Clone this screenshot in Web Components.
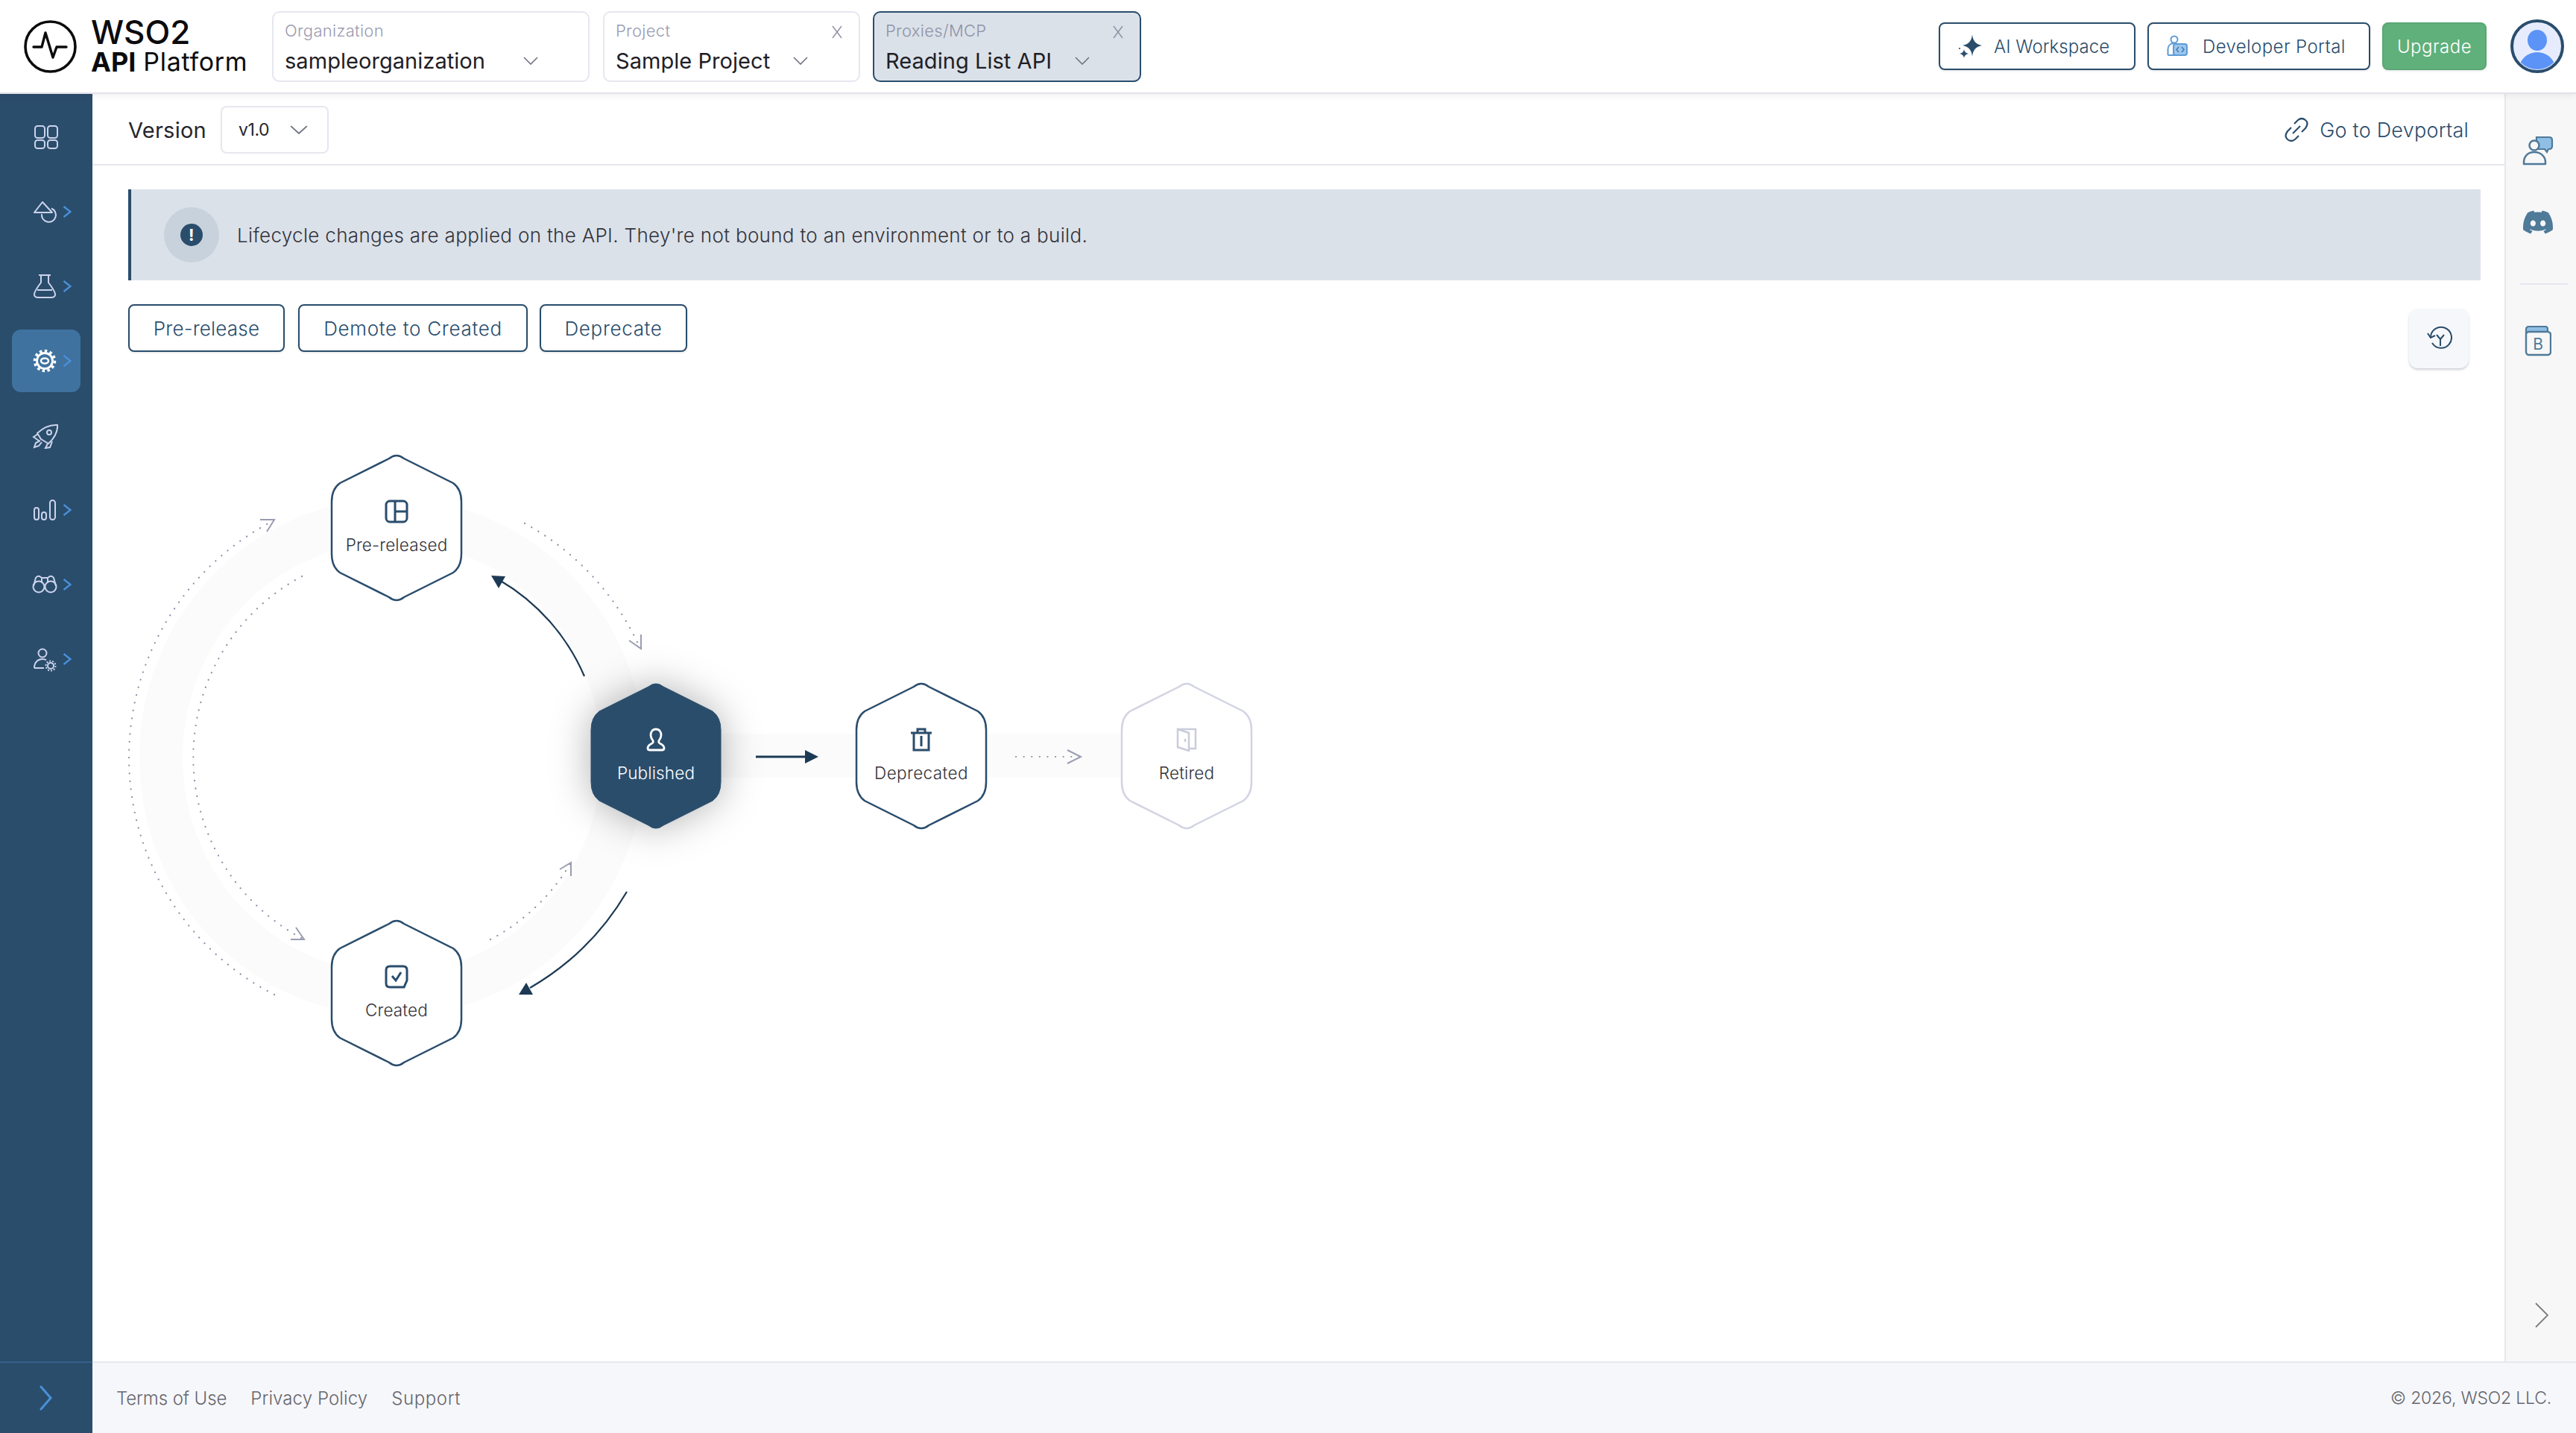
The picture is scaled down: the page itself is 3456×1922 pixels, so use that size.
<!DOCTYPE html>
<html><head><meta charset="utf-8"><title>Lifecycle</title>
<style>
html,body{margin:0;height:100%;background:#fff;overflow:hidden}
body{font-family:Inter,"Liberation Sans",sans-serif;color:#2b2b33;display:flex;flex-direction:column;height:1922px}
.row{display:flex;flex:1;min-height:0}
.col{display:flex;flex-direction:column;flex:1;min-width:0}
.mid{display:flex;flex:1;min-height:0}
.page{flex:1;min-width:0;display:flex;flex-direction:column}
</style></head><body>
<app-header></app-header>
<div class="row">
  <side-nav></side-nav>
  <div class="col">
    <div class="mid">
      <div class="page">
        <version-bar></version-bar>
        <info-banner>Lifecycle changes are applied on the API. They're not bound to an environment or to a build.</info-banner>
        <action-row></action-row>
        <lifecycle-diagram></lifecycle-diagram>
      </div>
      <right-rail></right-rail>
    </div>
    <app-footer></app-footer>
  </div>
</div>
<script>
const NAVY='#2a4d6c';
const chev=(w=20,h=11,c='#6f7280',sw=1.6)=>`<svg width="${w}" height="${h}" viewBox="0 0 20 11" preserveAspectRatio="none" fill="none"><path d="M1 1l9 9 9-9" stroke="${c}" stroke-width="${sw}"/></svg>`;
function define(name,html){customElements.define(name,class extends HTMLElement{
  connectedCallback(){ if(this.shadowRoot) return; const t=document.createElement('template'); t.innerHTML=html(this); this.attachShadow({mode:'open'}).appendChild(t.content.cloneNode(true)); }
});}

define('select-box',el=>`<style>
:host{display:flex;flex-direction:column;box-sizing:border-box;height:95px;border:2px solid #e6e7ef;border-radius:10px;background:#fff;padding:0 15px;position:relative}
:host([active]){background:#dbe1e9;border-color:${NAVY}}
.l{font-size:22px;line-height:24px;margin-top:12px;color:#9a9bb0;letter-spacing:.3px;font-weight:300}
:host([active]) .l{color:#8f93a6}
.v{margin-top:11px;font-size:29px;line-height:36px;color:#1f2026;white-space:nowrap;letter-spacing:.05px}
.c{position:absolute;top:59px;line-height:0}
.x{position:absolute;top:17px;right:22px;width:14px;height:18px}
</style><div class="l">${el.getAttribute('label')}</div><div class="v">${el.getAttribute('value')}</div>
<span class="c" style="left:${el.getAttribute('cx')}px">${chev()}</span>
${el.hasAttribute('closable')?`<svg class="x" viewBox="0 0 14 18" fill="none"><path d="M1 1l12 16M13 1L1 17" stroke="#8d8fa3" stroke-width="1.4"/></svg>`:''}`);

define('head-button',el=>`<style>
:host{display:inline-flex;align-items:center;box-sizing:border-box;height:64px;border:2px solid ${NAVY};border-radius:8px;background:#fff;color:${NAVY};font-size:24px;font-weight:300;white-space:nowrap;box-shadow:0 1px 3px rgba(0,0,0,.12)}
:host([green]){background:#5fb07b;border-color:#5aa775;color:#fff;letter-spacing:.5px}
</style><slot></slot>`);

define('app-header',()=>`<style>
:host{display:flex;align-items:center;flex:none;height:124px;box-sizing:content-box;border-bottom:2px solid #e2e3ea;box-shadow:0 3px 8px rgba(0,0,0,.06);background:#fff;position:relative;z-index:3;padding:0 16px 0 31px}
.logo{display:flex;align-items:center;gap:18px;margin-right:31px}
.lt{display:flex;flex-direction:column;color:#0b0b0d;width:212px;margin-top:2px}
.w{font-size:44px;line-height:40px;font-weight:500}
.a{font-size:34px;line-height:40px;white-space:nowrap;display:flex}
.a b{font-weight:700;font-size:36px;margin-right:10px}
.a span{letter-spacing:.7px}
.sel{display:flex;gap:17px}
.right{margin-left:auto;display:flex;align-items:center;gap:16px}
.av{margin-left:16px;width:72px;height:72px}
</style>
<div class="logo"><svg width="73" height="73" viewBox="0 0 73 73" fill="none"><circle cx="36.500" cy="36.500" r="33.500" stroke="#0b0b0d" stroke-width="3.600"/><path d="M14 37h11l5-19 10 33 5-14h13" stroke="#0b0b0d" stroke-width="3.400" stroke-linejoin="round" stroke-linecap="round"/></svg>
<div class="lt"><span class="w">WSO2</span><div class="a"><b>API</b><span>Platform</span></div></div></div>
<div class="sel">
<select-box style="width:426px;margin-right:1px" label="Organization" value="sampleorganization" cx="335"></select-box>
<select-box style="width:345px" label="Project" value="Sample Project" cx="253" closable></select-box>
<select-box style="width:360px" label="Proxies/MCP" value="Reading List API" cx="269" closable active></select-box>
</div>
<div class="right">
<head-button style="width:264px;padding-left:24px"><span style="display:flex;align-items:center;gap:14px"><svg width="34" height="32" viewBox="0 0 34 32"><path d="M19 0Q20 13 32 15 20 17 19 30 18 17 6 15 18 13 19 0Z" fill="${NAVY}"/><path d="M8 20Q8.500 25 14 26 8.500 27 8 32 7.500 27 2 26 7.500 25 8 20Z" fill="${NAVY}"/><circle cx="2" cy="19" r="1.100" fill="${NAVY}"/></svg><span style="letter-spacing:.05px">AI Workspace</span></span></head-button>
<head-button style="width:299px;padding-left:24px"><span style="display:flex;align-items:center;gap:18px"><svg width="30" height="32" viewBox="0 0 30 32" fill="none"><circle cx="10" cy="7" r="4.500" stroke="#5d9bd8" stroke-width="2"/><path d="M1.500 28v-8c0-5 3.500-8 8.500-8" stroke="#5d9bd8" stroke-width="2"/><path d="M1.500 28h14" stroke="#5d9bd8" stroke-width="2"/><rect x="9" y="13" width="18" height="15" rx="3" fill="#9cc6ec" stroke="#5d9bd8" stroke-width="2"/><path d="M16 17l-3 3.500 3 3.500M20 17l3 3.500-3 3.500" stroke="#3f79b4" stroke-width="1.500"/></svg><span style="letter-spacing:.4px">Developer Portal</span></span></head-button>
<head-button green style="width:140px;justify-content:center">Upgrade</head-button>
<svg class="av" viewBox="0 0 72 72"><defs><clipPath id="avc"><circle cx="36" cy="36" r="31"/></clipPath></defs><circle cx="36" cy="36" r="34" fill="#e6ecfd" stroke="${NAVY}" stroke-width="4"/><g clip-path="url(#avc)" fill="#5b93f7"><ellipse cx="36" cy="28" rx="13" ry="14"/><ellipse cx="36" cy="66" rx="24" ry="22"/></g></svg>
</div>`);

const ic=s=>`<svg width="36" height="36" viewBox="0 0 36 36" fill="none" stroke="currentColor" stroke-width="2">${s}</svg>`;
const NAV=[
 [`<rect x="5" y="3" width="13" height="16" rx="3.500"/><rect x="22" y="3" width="13" height="16" rx="3.500"/><rect x="5" y="22" width="13" height="11" rx="3.500"/><rect x="22" y="22" width="13" height="11" rx="3.500"/>`,0],
 [`<path d="M15 5L4 19h24z" stroke-linejoin="round"/><path d="M14 21a9.500 9.500 0 1 0 13-7.500"/>`,1],
 [`<path d="M10 3h16M13 3v10Q3 26 4 30q1 3 5 3h18q4 0 5-3 1-4-9-17V3M8 23h20"/>`,1],
 [`<circle cx="18" cy="18" r="10.500" stroke-width="2.800"/><circle cx="18" cy="18" r="13.500" stroke-width="3.500" stroke-dasharray="3.500 3.500"/><ellipse cx="18" cy="18" rx="5" ry="3.500" stroke-width="2.500"/>`,1],
 [`<path d="M13 23L8 15Q21 3 35 4Q36 17 23 29Z" stroke-linejoin="round"/><circle cx="24" cy="14" r="3"/><path d="M9 16L3 20l7 5M22 29l-3 6 6-1 3-8M12 25l-6 3-2 6 6-2 4-5"/>`,0],
 [`<rect x="4" y="15" width="6" height="16" rx="3"/><rect x="14" y="21" width="6" height="10" rx="3"/><rect x="25" y="5" width="7" height="26" rx="3.500"/>`,1],
 [`<g transform="translate(0 -3)"><circle cx="10" cy="24" r="7.500"/><circle cx="26" cy="24" r="7.500"/><path d="M3 23L6 12q2-3 5-2l3 2h8l3-2q3-1 5 2l3 11M17 24h2M14 12v7M22 12v7"/></g>`,1],
 [`<circle cx="15" cy="10" r="5.500"/><path d="M4 30c0-8 5-12 11-12 2 0 4 .5 5 1.500M4 30h13"/><circle cx="26" cy="27" r="4" stroke-width="2"/><circle cx="26" cy="27" r="6.500" stroke-width="2" stroke-dasharray="2 2"/>`,1],
];
define('nav-item',el=>{const i=+el.getAttribute('i');const [p,c]=NAV[i];return `<style>
:host{display:flex;align-items:center;height:84px;margin:0 16px;padding-left:26px;box-sizing:border-box;border-radius:12px;color:#ccd3ea;flex:none}
:host([active]){background:#3f729f;color:#fff}
.ch{margin-left:6px}
</style>${ic(p)}${c?`<svg class="ch" width="12" height="16" viewBox="0 0 12 16" fill="none"><path d="M1.500 1l9 7-9 7" stroke="#4a90d9" stroke-width="2.300"/></svg>`:''}`});
define('side-nav',()=>`<style>
:host{display:flex;flex-direction:column;width:124px;flex:none;background:${NAVY};gap:16px;padding-top:16px;box-sizing:border-box}
.t{margin-top:auto;height:96px;border-top:2px solid #35608a;box-sizing:border-box;display:flex;align-items:center;justify-content:center;padding-right:0}
</style>
${NAV.map((_,i)=>`<nav-item i="${i}" ${i==3?'active':''}></nav-item>`).join('')}
<div class="t"><svg width="18" height="34" viewBox="0 0 18 34" fill="none"><path d="M2 2l13 15L2 32" stroke="#4a90d9" stroke-width="3" stroke-linecap="round"/></svg></div>`);

define('version-bar',()=>`<style>
:host{display:flex;align-items:center;flex:none;height:96px;box-sizing:border-box;border-bottom:2px solid #e6e7ef;padding:1px 48px 0;font-size:29px;color:#26262c}
.vv{letter-spacing:.25px;margin-top:1px}
.s{margin-left:19px;width:145px;height:64px;box-sizing:border-box;border:2px solid #e6e7ef;border-radius:8px;display:flex;align-items:center;padding-left:22px;font-size:23px;gap:28px}
.vn{letter-spacing:-.4px}
.g{margin-left:auto;display:flex;align-items:center;gap:14px;color:${NAVY};font-size:27px;font-weight:300;padding-top:1px;letter-spacing:.22px}
</style><span class="vv">Version</span><div class="s"><span class="vn">v1.0</span>${chev(24,12)}</div>
<div class="g"><svg width="34" height="34" viewBox="0 0 34 34" fill="none" stroke="${NAVY}" stroke-width="2.200"><path d="M14 9l5-5q5-4 10 0t0 11l-5 5"/><path d="M20 25l-5 5q-5 4-10 0t0-11l5-5"/><path d="M12 22L22 12"/></svg><span>Go to Devportal</span></div>`);

define('info-banner',()=>`<style>
:host{display:flex;align-items:center;flex:none;height:122px;box-sizing:border-box;margin:32px 32px 0 48px;background:#dbe1e9;border-left:4px solid ${NAVY};padding-left:44px;font-size:26px;font-weight:300;color:#33333a;gap:24px;letter-spacing:.32px}
.i{width:74px;height:74px;border-radius:50%;background:#c8d2dc;display:flex;align-items:center;justify-content:center}
.d{width:30px;height:30px;border-radius:50%;background:${NAVY};color:#fff;display:flex;align-items:center;justify-content:center;font-size:22px;font-weight:700;line-height:1}
</style><div class="i"><div class="d">!</div></div><span><slot></slot></span>`);

define('act-btn',()=>`<style>
:host{display:inline-flex;align-items:center;justify-content:center;box-sizing:border-box;height:64px;border:2px solid ${NAVY};border-radius:8px;color:${NAVY};font-size:26px;font-weight:300;background:#fff;box-shadow:0 1px 3px rgba(0,0,0,.12);white-space:nowrap}
</style><slot></slot>`);
define('action-row',()=>`<style>
:host{display:flex;align-items:flex-start;flex:none;margin:32px 48px 0 48px;gap:16px}
.h{margin-left:auto;margin-top:6px;width:80px;height:80px;border-radius:12px;background:#f6f7fb;box-shadow:0 2px 3px rgba(60,70,100,.25);display:flex;align-items:center;justify-content:center}
</style>
<act-btn style="width:210px;margin-right:2px;letter-spacing:.2px">Pre-release</act-btn><act-btn style="width:308px;letter-spacing:.7px">Demote to Created</act-btn><act-btn style="width:198px;letter-spacing:.66px">Deprecate</act-btn>
<div class="h"><svg width="36" height="36" viewBox="0 0 36 36" fill="none" stroke="${NAVY}" stroke-width="2"><path d="M7 16a14 14 0 1 1 2 8"/><path d="M3 11l4 6 6-3"/><path d="M20 19l-5-6M20 19l5-6M20 19v9"/></svg></div>`);

const HEX="M77 4Q87 -4 97 4L163 37Q174 45 174 62V132Q174 149 163 157L97 190Q87 198 77 190L11 157Q0 149 0 132V62Q0 45 11 37Z";
define('lc-node',el=>{const k=el.getAttribute('kind')||'';const fill=k=='on'?NAVY:'#fff',st=k=='on'?NAVY:k=='off'?'#d2d4e3':NAVY;return `<style>
:host{position:absolute;left:${el.getAttribute('x')}px;top:${el.getAttribute('y')}px;width:174px;height:194px;display:flex;flex-direction:column;align-items:center;padding-top:59px;box-sizing:border-box;font-size:22.5px;font-weight:300;color:${k=='on'?'#fff':'#33333a'};letter-spacing:.15px}
svg.h{position:absolute;left:0;top:0;overflow:visible;${k=='on'?'filter:drop-shadow(0 0 26px rgba(0,0,0,.3));':''}}
.ic{position:relative;height:30px;display:block}
.t{position:relative;margin-top:19px;line-height:24px;white-space:nowrap}
</style><svg class="h" width="174" height="194" viewBox="0 0 174 194"><path d="${HEX}" fill="${fill}" stroke="${st}" stroke-width="${k=='on'?1:2.5}"/></svg>
<span class="ic"><slot name="icon"></slot></span><span class="t"><slot></slot></span>`});

define('lifecycle-diagram',()=>{const o=[160,560];const n=(x,y)=>`x="${x-o[0]}" y="${y-o[1]}"`;
const dot='fill="none" stroke="#8d91a8" stroke-width="2.200" stroke-dasharray="0.1 10.500" stroke-linecap="round"';
const head='fill="none" stroke="#9a9db0" stroke-width="2"';
return `<style>
:host{display:block;position:relative;flex:none;width:1560px;height:960px;margin:66px 0 0 36px}
svg.c{position:absolute;left:0;top:0}
</style>
<svg class="c" width="1560" height="960" viewBox="160 560 1560 960" fill="none">
<ellipse cx="526" cy="1016" rx="310" ry="318" stroke="#fbfbfb" stroke-width="58"/>
<rect x="960" y="984" width="550" height="59" fill="#fbfbfb"/>
<path d="M368 1334A357 357 0 0 1 360 702" ${dot}/>
<path d="M405 773A275 275 0 0 0 408 1260" ${dot}/>
<path d="M704 702A357 357 0 0 1 859 870" ${dot}/>
<path d="M658 1260A275 275 0 0 0 766 1157" ${dot}/>
<path d="M1363 1015H1448" ${dot}/>
<path d="M349 697H368L358 713M390 1260H408L397 1244M860 851V870L844 859M751 1166L766 1157V1175M1432 1006L1450 1015 1432 1024" ${head}/>
<path d="M784 907A275 275 0 0 0 670 778" stroke="#1d3a55" stroke-width="2.200"/>
<path d="M659 772L678 773 669 789Z" fill="#1d3a55"/>
<path d="M841 1196A360 360 0 0 1 711 1325" stroke="#1d3a55" stroke-width="2.200"/>
<path d="M696 1334L706 1318 715 1334Z" fill="#1d3a55"/>
<path d="M1014 1015H1082" stroke="#1d3a55" stroke-width="3"/>
<path d="M1098 1015L1080 1006V1024Z" fill="#1d3a55"/>
</svg>
<lc-node ${n(445,611)}><svg slot="icon" width="32" height="32" viewBox="0 0 32 32" fill="none" stroke="${NAVY}" stroke-width="3"><rect x="2" y="2" width="28" height="28" rx="5"/><path d="M14 2v28M14 16h16"/></svg>Pre-released</lc-node>
<lc-node ${n(793,917)} kind="on"><svg slot="icon" width="32" height="32" viewBox="0 0 32 32" fill="none" stroke="#fff" stroke-width="2.800"><path d="M16 2c-5 0-7 4-7 8 0 3 1.500 5.500 3 7.500 1 1.500 0 3-2 4-3 1.500-5 3-5 6 0 1.500 1 2.500 3 2.500h16c2 0 3-1 3-2.500 0-3-2-4.500-5-6-2-1-3-2.500-2-4 1.500-2 3-4.500 3-7.500 0-4-2-8-7-8z"/></svg>Published</lc-node>
<lc-node ${n(1149,917)}><svg slot="icon" width="30" height="32" viewBox="0 0 30 32" fill="none" stroke="${NAVY}" stroke-width="3"><path d="M1 7h28M10 6V2h10v4M5 7v23h20V7M15 11v14"/></svg><span style="letter-spacing:.4px">Deprecated</span></lc-node>
<lc-node ${n(1505,917)} kind="off"><svg slot="icon" width="30" height="32" viewBox="0 0 30 32" fill="none" stroke="#c9ccdb" stroke-width="2.500"><path d="M3 2h24v26H18"/><path d="M3 2l15 5v24L3 26zM13 15v4"/></svg>Retired</lc-node>
<lc-node ${n(445,1235)}><svg slot="icon" width="32" height="32" viewBox="0 0 32 32" fill="none" stroke="${NAVY}" stroke-width="3"><path d="M7 2h18q5 0 5 5v14l-4 9H7q-5 0-5-5V7q0-5 5-5z"/><path d="M10 15l5 6 7-11"/></svg>Created</lc-node>`});

define('right-rail',()=>{const c='#4f7a98';return `<style>
:host{display:flex;flex-direction:column;align-items:center;flex:none;width:96px;box-sizing:border-box;background:#f7f7f8;border-left:2px solid #e6e7ef;padding:56px 8px 41px 0}
.b{width:42px;height:40px;display:flex;align-items:center;justify-content:center}
.d{width:64px;height:2px;flex:none;background:#e6e7ef;margin:62px -8px 55px 0;position:relative;left:4px}
.n{margin-top:auto;margin-left:10px}
</style>
<div class="b"><svg width="42" height="42" viewBox="0 0 42 42"><path d="M19 3h17q4 0 4 4v8q0 4-4 4h-1l-2 4-3-4H19z" fill="#90bfe6" stroke="${c}" stroke-width="2.200"/><circle cx="16" cy="14" r="6.500" fill="#f7f7f8" stroke="${c}" stroke-width="2.500"/><path d="M2 39v-2c0-9 6-14 14-14s15 5 15 14v2z" fill="#f7f7f8" stroke="${c}" stroke-width="2.500" stroke-linejoin="round"/></svg></div>
<div class="b" style="margin-top:56px"><svg width="40" height="32" viewBox="0 0 24 19" preserveAspectRatio="none"><g transform="translate(0 -2.500)"><path fill="${c}" d="M20.317 4.3698a19.7913 19.7913 0 00-4.8851-1.5152.0741.0741 0 00-.0785.0371c-.211.3753-.4447.8648-.6083 1.2495-1.8447-.2762-3.68-.2762-5.4868 0-.1636-.3933-.4058-.8742-.6177-1.2495a.077.077 0 00-.0785-.037 19.7363 19.7363 0 00-4.8852 1.515.0699.0699 0 00-.0321.0277C.5334 9.0458-.319 13.5799.0992 18.0578a.0824.0824 0 00.0312.0561c2.0528 1.5076 4.0413 2.4228 5.9929 3.0294a.0777.0777 0 00.0842-.0276c.4616-.6304.8731-1.2952 1.226-1.9942a.076.076 0 00-.0416-.1057c-.6528-.2476-1.2743-.5495-1.8722-.8923a.077.077 0 01-.0076-.1277c.1258-.0943.2517-.1923.3718-.2914a.0743.0743 0 01.0776-.0105c3.9278 1.7933 8.18 1.7933 12.0614 0a.0739.0739 0 01.0785.0095c.1202.099.246.1981.3728.2924a.077.077 0 01-.0066.1276 12.2986 12.2986 0 01-1.873.8914.0766.0766 0 00-.0407.1067c.3604.698.7719 1.3628 1.225 1.9932a.076.076 0 00.0842.0286c1.961-.6067 3.9495-1.5219 6.0023-3.0294a.077.077 0 00.0313-.0552c.5004-5.177-.8382-9.6739-3.5485-13.6604a.061.061 0 00-.0312-.0286zM8.02 15.3312c-1.1825 0-2.1569-1.0857-2.1569-2.419 0-1.3332.9555-2.4189 2.157-2.4189 1.2108 0 2.1757 1.0952 2.1568 2.419 0 1.3332-.9555 2.4189-2.1569 2.4189zm7.9748 0c-1.1825 0-2.1569-1.0857-2.1569-2.419 0-1.3332.9554-2.4189 2.1569-2.4189 1.2108 0 2.1757 1.0952 2.1568 2.419 0 1.3332-.946 2.4189-2.1568 2.4189Z"/></g></svg></div>
<div class="d"></div>
<div class="b"><svg width="36" height="42" viewBox="0 0 36 42"><path d="M2 11V6q0-4 4-4h22q3 0 3 4v5z" fill="#90bfe6" stroke="${c}" stroke-width="2.200"/><rect x="2" y="9" width="33" height="31" rx="4" fill="#f7f7f8" stroke="${c}" stroke-width="2.400"/><text x="18" y="33" text-anchor="middle" font-family="Inter" font-size="21" fill="${c}">B</text></svg></div>
<div class="n"><svg width="18" height="34" viewBox="0 0 18 34" fill="none"><path d="M1 1l16 16L1 33" stroke="#7b7b80" stroke-width="1.800"/></svg></div>`});

define('app-footer',()=>`<style>
:host{display:flex;align-items:center;flex:none;height:96px;box-sizing:border-box;border-top:2px solid #e6e7ef;background:#f6f7fb;padding:0 33px 0 32px;font-size:24px;font-weight:300;color:#66666c;gap:32px}
.r{margin-left:auto;font-size:23px;letter-spacing:-.2px}
</style><span style="letter-spacing:-.1px">Terms of Use</span><span style="letter-spacing:.1px">Privacy Policy</span><span style="letter-spacing:.6px">Support</span><span class="r">© 2026, WSO2 LLC.</span>`);
</script>
</body></html>
